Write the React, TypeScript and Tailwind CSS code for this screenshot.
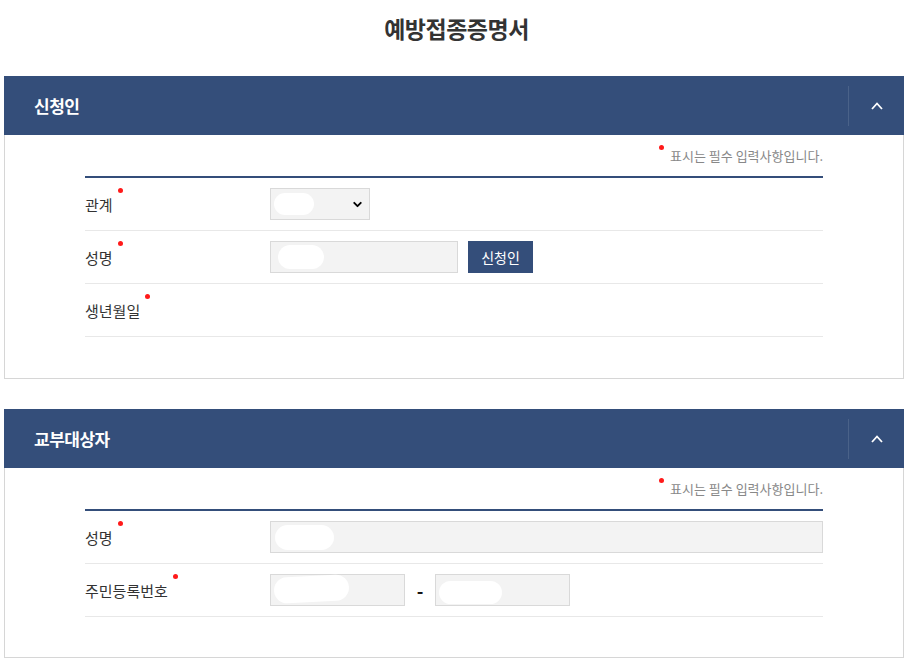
import type React from "react"
import { ChevronDown } from "lucide-react"

const Dot: React.FC = () => (
  <span className="absolute top-[-7px] right-[-10px] w-[5px] h-[5px] rounded-full bg-[#ff1a1a]" />
)

const Label: React.FC<{ text: string }> = ({ text }) => (
  <div className="w-[185px] shrink-0">
    <span className="relative inline-block text-[15px] leading-[20px] text-[#333]">
      {text}
      <Dot />
    </span>
  </div>
)

const Blob: React.FC<{ className: string }> = ({ className }) => (
  <span className={`absolute bg-white rounded-full ${className}`} />
)

const Header: React.FC<{ title: string }> = ({ title }) => (
  <div className="h-[59px] bg-[#344e7a] flex items-center">
    <div className="flex-1 pl-[30px] text-white text-[17px] font-bold tracking-[-0.5px]">{title}</div>
    <div className="h-[40px] w-[56px] border-l border-[#4a6289] flex items-center justify-center">
      <svg width="14" height="9" viewBox="0 0 14 9" fill="none">
        <polyline points="2,8 7,2.5 12,8" stroke="#fff" strokeWidth="1.8" />
      </svg>
    </div>
  </div>
)

const Note: React.FC = () => (
  <div className="h-[41px] flex items-center justify-end">
    <span className="relative text-[13px] text-[#888] leading-[20px]">
      <span className="absolute left-[-11px] top-[-1px] w-[5px] h-[5px] rounded-full bg-[#ff1a1a]" />
      표시는 필수 입력사항입니다.
    </span>
  </div>
)

const Row: React.FC<{ label: string; children?: React.ReactNode }> = ({ label, children }) => (
  <div className="h-[53px] border-b border-[#e8e8e8] flex items-center">
    <Label text={label} />
    <div className="flex-1 flex items-center">{children}</div>
  </div>
)

const inputBox = "relative h-[32px] bg-[#f3f3f3] border border-[#d9d9d9]"

export default function App() {
  return (
    <div className="min-h-screen bg-white font-['Noto_Sans_CJK_KR','Noto_Sans',sans-serif] pb-[12px]">
      <h1 className="h-[76px] pt-[12px] text-center text-[23px] leading-[32px] font-bold text-[#333] tracking-[-0.5px]">
        예방접종증명서
      </h1>

      <div className="w-[900px] ml-[4px]">
        <Header title="신청인" />
        <div className="border border-t-0 border-[#d6d6d6] px-[80px] pb-[41px]">
          <Note />
          <div className="h-[2px] bg-[#344e7a]" />
          <Row label="관계">
            <div className={`${inputBox} w-[100px] flex items-center justify-end pr-[5px]`}>
              <Blob className="left-[3px] top-[4px] w-[40px] h-[22px]" />
              <ChevronDown className="w-[13px] h-[13px] text-black" strokeWidth={3.5} />
            </div>
          </Row>
          <Row label="성명">
            <div className={`${inputBox} w-[188px]`}>
              <Blob className="left-[7px] top-[3px] w-[46px] h-[24px]" />
            </div>
            <button className="ml-[10px] h-[32px] w-[65px] bg-[#344e7a] text-white text-[14px]">신청인</button>
          </Row>
          <Row label="생년월일" />
        </div>

        <div className="mt-[30px]">
          <Header title="교부대상자" />
          <div className="border border-t-0 border-[#d6d6d6] px-[80px] pb-[40px]">
            <Note />
            <div className="h-[2px] bg-[#344e7a]" />
            <Row label="성명">
              <div className={`${inputBox} flex-1`}>
                <Blob className="left-[4px] top-[3px] w-[59px] h-[25px]" />
              </div>
            </Row>
            <Row label="주민등록번호">
              <div className={`${inputBox} w-[135px]`}>
                <Blob className="left-[3px] top-[1px] w-[75px] h-[26px] -rotate-3" />
              </div>
              <span className="w-[30px] text-center text-[18px] font-bold text-[#111]">-</span>
              <div className={`${inputBox} w-[135px]`}>
                <Blob className="left-[3px] top-[6px] w-[63px] h-[23px]" />
              </div>
            </Row>
          </div>
        </div>
      </div>
    </div>
  )
}
